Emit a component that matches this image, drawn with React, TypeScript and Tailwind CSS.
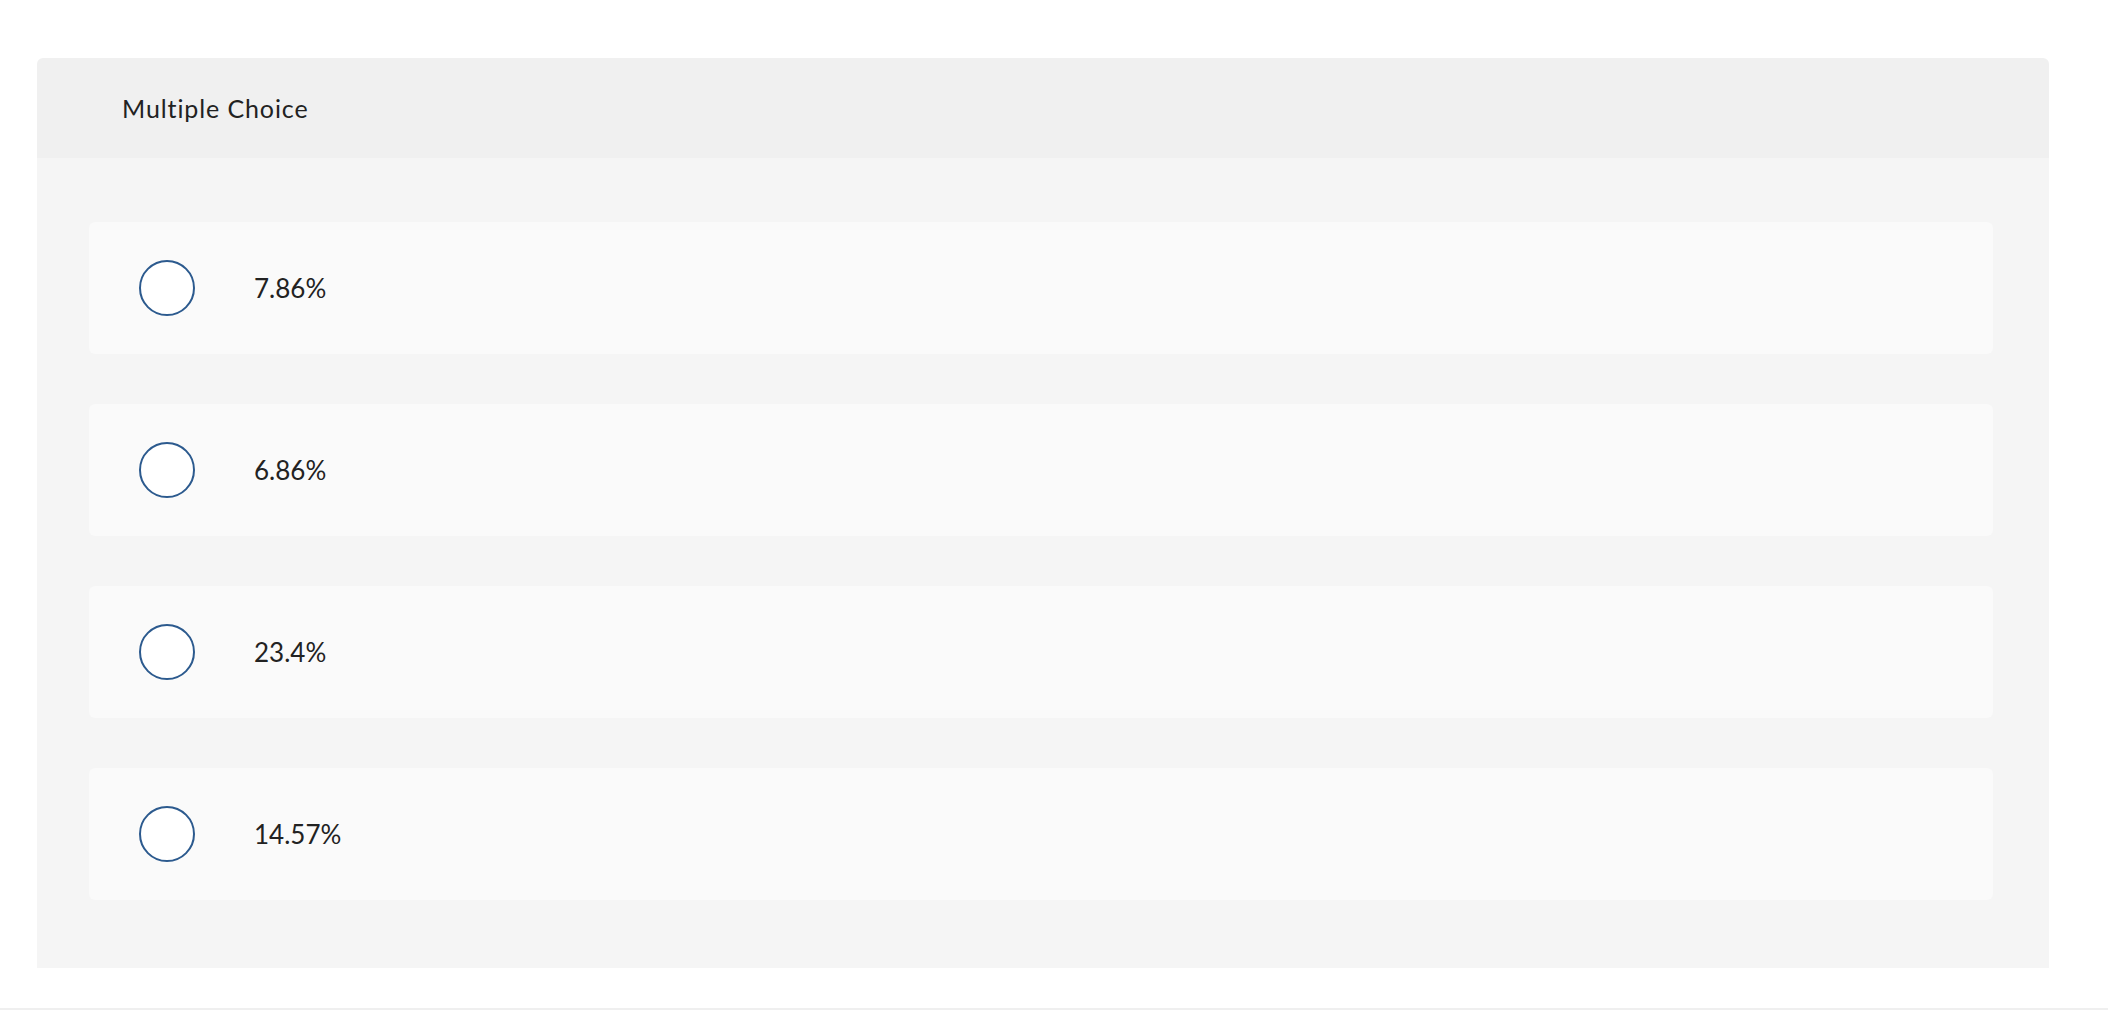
const options = ['7.86%', '6.86%', '23.4%', '14.57%'];

export default function App() {
  return (
    <div className="min-h-screen bg-white font-['Lato',sans-serif] text-[#222222] [font-variant-ligatures:none]">
      <div className="pt-[58px] pl-[37px]">
        <div className="w-[2012px] rounded-t-md overflow-hidden">
          {/* Header */}
          <div className="h-[100px] bg-[#f0f0f0] flex items-center pl-[85px]">
            <h2 className="text-[25px] leading-none tracking-[0.9px]">Multiple Choice</h2>
          </div>

          {/* Options */}
          <div className="bg-[#f5f5f5] pt-[64px] pb-[68px] pl-[52px] pr-[56px] flex flex-col gap-[50px]">
            {options.map((opt) => (
              <label
                key={opt}
                className="h-[132px] bg-[#fafafa] rounded-md flex items-center pl-[50px] cursor-pointer"
              >
                <span className="w-[56px] h-[56px] rounded-full border-2 border-[#2c5a8e] bg-white shrink-0" />
                <span className="ml-[59px] text-[26px] leading-none">{opt}</span>
              </label>
            ))}
          </div>
        </div>
      </div>
      <div className="mt-[40px] h-[2px] bg-[#efefef]" />
    </div>
  );
}
